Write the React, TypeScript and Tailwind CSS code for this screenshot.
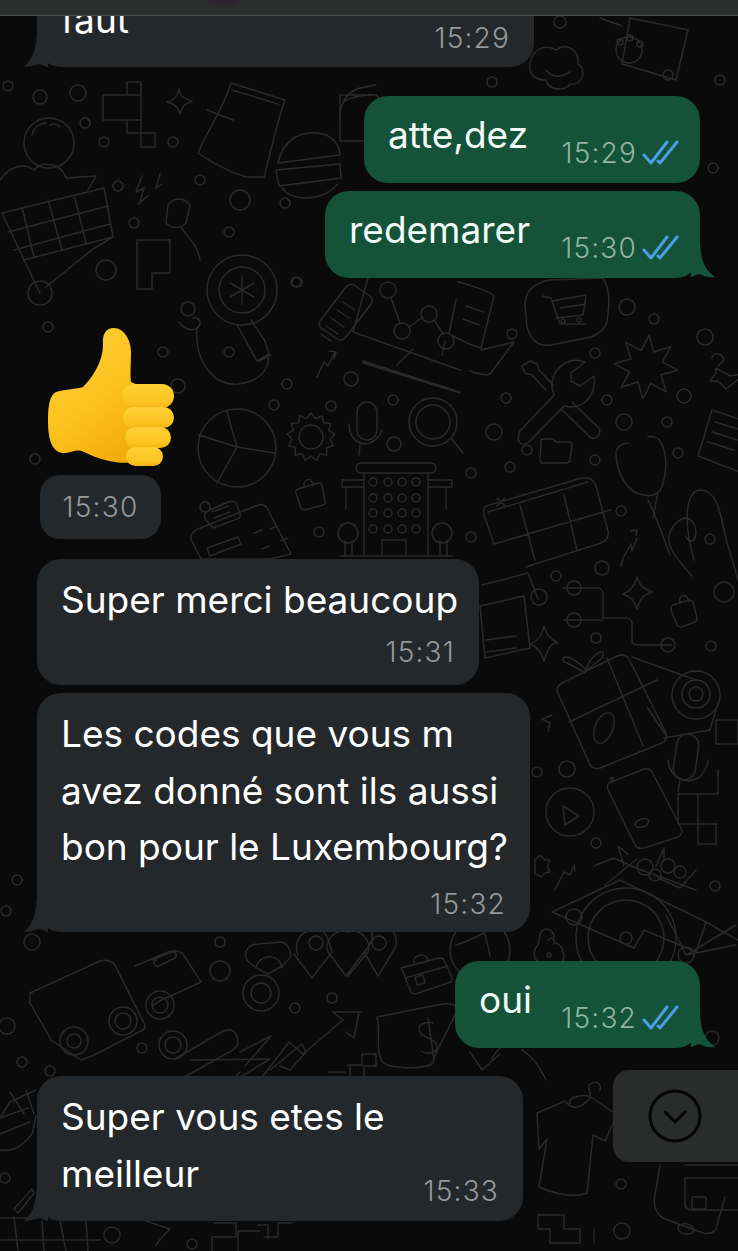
const DOTS: [number, number, number][] = [
  [188, 309, 7], [297, 282, 5], [229, 352, 5], [287, 384, 5], [351, 379, 7], [274, 405, 5], [331, 406, 5], [393, 400, 5],
  [394, 444, 7], [205, 507, 5], [319, 532, 5], [627, 307, 8], [654, 319, 5], [512, 334, 5], [705, 337, 8], [595, 353, 5],
  [506, 398, 5], [607, 400, 5], [684, 396, 7], [494, 432, 8], [624, 422, 8], [667, 422, 5], [527, 450, 5], [510, 467, 5],
  [595, 460, 5], [678, 453, 5], [471, 473, 5], [471, 537, 5], [621, 511, 5], [710, 539, 5], [556, 576, 5], [602, 568, 7],
  [539, 597, 8], [724, 592, 10], [596, 638, 5], [711, 646, 5], [567, 769, 8], [537, 772, 5], [596, 843, 5], [715, 886, 5],
  [574, 917, 8], [621, 1184, 5], [622, 1231, 8], [712, 1038, 7], [332, 998, 5], [295, 1008, 5], [32, 942, 8], [6, 911, 5],
  [17, 880, 5], [220, 942, 5], [220, 971, 10], [7, 1026, 8], [142, 1048, 5], [22, 1062, 5], [50, 1071, 5], [5, 1178, 5],
  [112, 1235, 8], [192, 1244, 5], [48, 327, 5], [163, 352, 5], [35, 459, 5], [178, 386, 7], [8, 86, 5], [40, 97, 7],
  [78, 93, 8], [85, 123, 5], [104, 142, 5], [173, 142, 5], [118, 186, 5], [200, 180, 5], [240, 200, 10], [285, 203, 5],
  [134, 223, 5], [229, 232, 5], [560, 22, 6], [492, 82, 5], [668, 75, 5], [720, 80, 5], [713, 168, 5], [296, 282, 5],
]

function spiky(cx: number, cy: number, outer: number, inner: number, points: number, rot = 0) {
  let d = ''
  for (let i = 0; i < points * 2; i++) {
    const r = i % 2 === 0 ? outer : inner
    const a = rot + (i * Math.PI) / points
    d += `${i === 0 ? 'M' : 'L'}${(cx + r * Math.sin(a)).toFixed(1)} ${(cy - r * Math.cos(a)).toFixed(1)} `
  }
  return d + 'Z'
}

// the wallpaper doodles, in page coordinates
function Wallpaper() {
  return (
    <svg className="absolute inset-0" width="738" height="1251" viewBox="0 0 738 1251" fill="none" stroke="#2a2a2a" strokeWidth="1.5" strokeLinecap="round" strokeLinejoin="round">
      {DOTS.map(([cx, cy, r], i) => <circle key={i} cx={cx} cy={cy} r={r} />)}

      {/* top left squares, star, bag, burger */}
      <path d="M127 82h14v13h-14zM103 95h38v25h-38zM127 120h14v13h-14zM141 133h14v14h-14z" />
      <path d="M179 89c2 8 5 10 13 12c-8 3-10 6-12 13c-2-7-5-10-13-12c7-2 10-5 12-13z" />
      <path d="M231 83l54 17c-8 22-15 55-21 77l-18 0c-18-6-34-14-48-24c10-24 26-46 33-70z" />
      <path d="M207 110l26 10M232 90l46 14" />
      <path d="M278 163c4-22 24-36 48-28c9 4 14 12 14 20zM276 170l64-6l1 14l-62 8zM282 188c10 14 40 14 56-4" />
      <path d="M340 118c0-14 6-26 20-30l16-3M372 95c-10 0-20 2-28 6" />
      <circle cx="49" cy="143" r="25" />
      <path d="M32 135c2-8 8-12 14-12M50 125c4-2 8-1 10 2" />
      <path d="M2 213l102-25l9 49l-89 23zM22 207l12 50M48 200l14 50M74 195l12 48M8 232l100-26M14 250l96-26" />
      <path d="M24 260l16 33M113 237l-20 12L46 287" />
      <circle cx="40" cy="293" r="12" />
      <circle cx="106" cy="270" r="10" />
      <path d="M0 180c10-14 24-18 34-10c10-10 28-6 32 8l30-2l-8 14" />
      <path d="M142 176l-6 16l8-4l-4 14M160 174l-4 14l6-4M148 196l-10 8M168 205c6-8 16-8 22 0l-4 18c-6 6-14 6-20 0zM180 226c10 14 18 20 20 34" />
      <path d="M137 240h33v33h-18v16h-15z" />
      <path d="M630 18l58 12l-12 50l-54-16zM600 18l22 8" />
      <circle cx="629" cy="50" r="13" />
      <circle cx="620" cy="42" r="3" />
      <circle cx="630" cy="38" r="3" />
      <circle cx="640" cy="44" r="3" />
      <path d="M530 70c-2-18 14-28 26-20c10-8 24 0 22 14c10 6 4 22-8 20c-6 8-22 6-24-4c-8 0-14-2-16-10zM546 70c6 8 14 8 24 2" />
      <path d="M340 95h36l22 24c-6 18-16 24-30 22h-28z" />

      {/* flower magnifier and lamp */}
      <circle cx="242" cy="290" r="35" />
      <circle cx="242" cy="290" r="23" />
      <path d="M242 276v28M230 283l24 14M230 297l24-14" />
      <path d="M237 325l20 36l12-7l-4-13l-14-21M259 361l12-6M268 355c2 12 -6 26-30 29c-24 2-44-22-41-56M197 328c-6 4-14 0-18-6M197 328c6-4 2-12-4-10" />

      {/* ram stick, arrow */}
      <path d="M320 321l26-34c2-3 5-3 8-2l16 11c3 2 3 5 1 8l-26 34c-2 2-5 3-8 1l-16-11c-2-2-3-5-1-7z" />
      <path d="M321 334l10 7M326 326l12 8M331 318l13 9M337 310l12 8M343 302l12 8" />
      <path d="M317 377l7-15l4 4l7-14M329 351l7 1l-2 7" />

      {/* laptop with chart */}
      <path d="M368 278l-15 54l107 38M363 363l97 30M373 364c-6-2-12-1-10-3l97 31M397 365l16-16M442 355l3-14" />
      <path d="M391 298l9 25M409 327l14-10M434 320l9 14M456 300l-7 33" />
      <circle cx="388" cy="290" r="8" />
      <circle cx="402" cy="331" r="8" />
      <circle cx="429" cy="314" r="8" />
      <circle cx="446" cy="341" r="8" />

      {/* pie chart, gear, lock, mic, magnifier */}
      <circle cx="237" cy="448" r="39" />
      <path d="M227 412l10 35l-38-12M237 447l38 6M237 447l-20 36" />
      <path d={spiky(311, 437, 24, 19, 13)} />
      <circle cx="311" cy="437" r="12" />
      <path d="M298 489l20-6c2-1 3 0 4 2l3 16c1 2 0 3-2 4l-18 5c-2 0-3 0-4-2l-5-15c-1-2 0-3 2-4zM304 487c-1-10 9-10 9-1" />
      <rect x="357" y="402" width="20" height="38" rx="10" />
      <path d="M349 424c0 22 24 28 33 6M360 445l-1 10" />
      <circle cx="433" cy="422" r="24" />
      <circle cx="433" cy="422" r="17" />
      <path d="M451 438l12 15" />

      {/* building */}
      <rect x="356" y="463" width="80" height="10" rx="5" />
      <path d="M364 473v82M428 473v82M364 480h-22v7h22M428 480h24v7h-24M346 487v22M446 487v22M345 541v15M352 541v15M440 541v15M447 541v15M340 556h112M382 556v-16h24v16" />
      <circle cx="348" cy="533" r="10" />
      <circle cx="442" cy="533" r="10" />
      {[482, 498, 513, 529].map(y => [373, 388, 402, 416].map(x => <circle key={`${x}-${y}`} cx={x} cy={y} r="4" />))}

      {/* calculator */}
      <path d="M198 529l60-24c4-1 7 0 9 3l24 46l-20 5h-70l-10-20c-1-5 3-8 7-10z" />
      <path d="M206 520c-3-4-1-8 2-9l20-9c5-2 8 0 9 3l3 8c1 3 0 5-3 6l-24 9z M212 512l16-6M214 518l16-6" />
      <path d="M207 548l31-11l3 7l-31 12zM254 533l8-3M270 529l7-3M262 549l7-3M281 541l7-3" />

      {/* cart blob */}
      <path d="M525 305c0-14 10-22 24-25l54-2c8 12 6 30 4 44c-2 8-8 12-16 15l-40 8c-12 2-20-4-24-18z" />
      <path d="M543 296l8 2l9 26h26M552 301l34-6l-3 20l-27 3M560 308l26-4" />
      <circle cx="563" cy="321" r="2" />
      <circle cx="579" cy="320" r="2" />

      {/* wrench, star, stethoscope, folder, table */}
      <path d="M520 431l34-36c-5-12-1-28 16-34c5-1 10-1 15 1l-14 11l0 8l9 5l14-10c2 12-4 26-16 30c-6 2-10 1-14 0l-35 36c-5 4-10 2-11-3z" />
      <path d="M572 402l27 26c3 6-3 12-8 10l-29-28M546 390l-14-15l-7-2l-3-7l8-5l7 3l2 6l14 15" />
      <path d={spiky(646, 367, 32, 17, 8, 0.1)} />
      <path d="M544 439h9l3 3h13c2 0 3 2 3 4l-2 14c0 2-2 3-4 3h-23c-2 0-3-2-3-4l1-18c0-1 1-2 3-2z" />
      <path d="M486 506l96-28c7-1 12 2 14 8l12 45c1 6-2 10-7 12l-75 24M486 506c-3 3-3 8-1 12l9 26M488 512l100-30M494 544l116-34M520 505l15 55M564 495l13 55M497 498l8 8M505 498l-8 8" />
      <path d="M628 443c-5 0-12 4-12 10c0 18 10 40 28 42c8 2 14 0 18-8c6-20 4-36-2-46c-2-4-8-5-12-4M648 500c10 20 16 40 22 55M658 492l-5 26" />
      <path d="M694 560c-8-26-12-68 6-70c16 0 20 20 24 40c4 20 12 40 14 50M680 520c-8 6-14 14-10 26c6 14 14 20 22 30M680 520c10-6 16 4 16 14c-2 10-8 8-10 2" />
      <path d="M621 566l2-8l8-14l1 7l5-13M631 531l6-1l-1 5" />
      <path d="M712 410l42 14l-14 48l-42-16zM715 422l26 8M712 432l26 8M708 442l26 8" />
      <path d="M716 368l14 8l12-2l-2 4l-14 11l-8-8l-8 0l6-8zM712 358c0-6 10-6 12 2l-6 6" />
      <path d="M458 282c5 1 34 10 36 14l-13 52l-12-4l-16-8M481 350l33-8l-24 32c-4 2-12 0-20-3M466 306l18 6M463 319l16 6" />

      {/* circuit, star, lock */}
      <path d="M563 588h34c4 0 6 3 6 6v24h23c4 0 6 3 6 6v16c0 3 2 5 5 5h35M564 620h39" />
      <circle cx="574" cy="588" r="7" />
      <circle cx="574" cy="620" r="7" />
      <circle cx="668" cy="645" r="7" />
      <path d="M637 577c3 9 5 11 15 15c-9 3-12 7-15 17c-3-9-7-13-14-15c8-3 11-8 14-17z" />
      <path d="M544 626c3 9 5 12 14 17c-8 0-10 6-14 18c-2-8-6-14-14-17c8-3 12-8 14-18z" />
      <path d="M673 605l16-5c2 0 3 0 4 2l4 16c0 2 0 3-2 4l-14 5c-2 0-3 0-4-2l-6-15c0-2 0-4 2-5zM680 603c-2-10 7-10 9-1" />
      <path d="M482 585l46-12l10 26M480 606l44-10l6 52l-45 10zM486 640l30-4M486 652l30-4" />

      {/* gift, roll, phone, play, mic, squares */}
      <path d="M562 683l55-27c5-2 9-2 12 3l36 72c3 6 1 10-3 12l-62 25c-4 1-8 0-10-3l-32-72c-2-4 0-8 4-10zM607 658l36 88M569 722l88-42" />
      <ellipse cx="604" cy="728" rx="9" ry="16" transform="rotate(22 604 728)" />
      <path d="M585 673c-6-4-14-8-18-10c-6-2-5-6 0-6c6 1 16 9 19 13c2-7 6-14 14-18c4-1 4 3 2 6l-16 13M552 715l-10 4l8 4l-2 8" />
      <path d="M632 657l64 23M664 738l46-8l7-24M647 707l20 30" />
      <circle cx="696" cy="695" r="24" />
      <circle cx="696" cy="694" r="14" />
      <circle cx="696" cy="694" r="7" />
      <path d="M609 783l35-14c3-1 6 0 8 3l29 56c2 4 0 7-3 9l-34 11c-4 1-7 0-9-3l-26-53c-2-4-2-7 0-9z" />
      <circle cx="612" cy="779" r="1.5" />
      <ellipse cx="642" cy="823" rx="7" ry="4" transform="rotate(-20 642 823)" />
      <rect x="675" y="734" width="22" height="46" rx="11" transform="rotate(8 686 757)" />
      <path d="M668 760c2 20 20 24 30 18c4-2 10-12 10-18M680 780l-2 12" />
      <circle cx="570" cy="812" r="24" />
      <path d="M563 806l16 10l-14 9z" />
      <path d="M678 794h40v-24M678 794v30h40M708 794h-10v50h18v-20M718 720h20M716 744h22v-24M716 744v-24h22" />
      <path d="M535 860l5-5l5 5l5 0l-3 6l3 6l-5 1l-4 4l-6-3zM555 890l9-18l6 3l4-10l1 6" />

      {/* bike basket */}
      <path d="M594 866l20-8l22 10l60 22M605 885l32-26M620 880l86 42l-10 30l-52-22l-10 18l-82-36zM706 922l32 18" />
      <path d="M624 866l-6-20l10 8M656 866l8-18l0 12M696 870l-16 18l-22-10" />
      <circle cx="645" cy="867" r="8" />
      <circle cx="655" cy="875" r="6" />
      <circle cx="668" cy="866" r="7" />
      <circle cx="680" cy="872" r="6" />
      <circle cx="626" cy="938" r="50" />
      <circle cx="626" cy="938" r="38" />
      <circle cx="626" cy="938" r="6" />
      <circle cx="686" cy="955" r="8" />
      <path d="M686 955l50-30M686 955l-20-40M686 955l50-10" />
      <path d="M540 935c2-8 10-8 14 0v8c8 0 14 14 6 22l-14 2c-10-2-16-14-8-22zM548 940c4-3 6-2 6 4" />
      <circle cx="549" cy="955" r="2" />

      {/* bottom row */}
      <path d="M30 993l70-32c6-2 12 0 15 4l30 60c0 2 0 4-2 5l-51 26l-11 4l-30-20c-4-8-16-28-21-37zM135 966l28-12c8-4 16-4 20 0l18 28l-30 14c-6 2-14 6-18 10" />
      <path d="M152 960l20-8c5 0 5 4 3 6l-16 8c-4 2-7-4-3-6" />
      <circle cx="74" cy="1041" r="14" />
      <circle cx="74" cy="1041" r="7" />
      <circle cx="123" cy="1021" r="14" />
      <circle cx="123" cy="1021" r="8" />
      <circle cx="160" cy="1005" r="14" />
      <circle cx="160" cy="1005" r="8" />
      <path d="M175 1059l48-28c6-2 12-2 14 6c2 8 0 10-6 14l-50 28M175 1059h0M190 1060l80-1l-46 28H190" />
      <circle cx="173" cy="1045" r="14" />
      <circle cx="173" cy="1045" r="8" />
      <path d="M246 958c-2-8 4-14 12-14l24-2c6 2 10 10 8 16l-8 8l-14 8c-8-4-20-10-22-16zM256 968c2-14 24-16 26 0" />
      <circle cx="261" cy="993" r="18" />
      <circle cx="261" cy="993" r="10" />
      <path d="M298 955c-4-10 0-24 14-24M312 978l-18-24M312 978l20-26c-3-10-4-16-10-22M346 976l-18-24c-4-12 8-24 20-20c12-4 24 8 20 20l-20 24M346 976l18-24c8-8 12-20 4-26M378 976l-14-24M378 976l16-26c4-8 2-16-4-22" />
      <circle cx="316" cy="943" r="7" />
      <circle cx="379" cy="943" r="7" />
      <path d="M401 968l38-10c2 0 4 0 5 2l8 18c1 2 0 3-1 4l-36 12c-2 0-3 0-4-2l-8-20c-1-2-1-3-2-4zM414 963c-1-6 4-8 8-8c4 0 6 4 6 6M405 978l43-12" />
      <rect x="416" y="976" width="8" height="8" transform="rotate(-16 420 980)" />
      <path d="M240 1052l31-16l-26 30M240 1072l-20 22l-24 22M270 1070l32-26l4 8l-16 18l-10-4M362 1012l-3 0l-26 0l10 8l-40 34l-14-12l-26 34M359 1012l-5 26l-8-6" />
      <path d="M377 1017l60-12c2 0 12-4 22 2l-12 24c-4 8-14 26-14 32c-4 6-50 8-52-4c-6-12 0-26-4-42z" />
      <path d="M433 1023c-4-2-14 0-14 6c0 10 18 8 18 18c0 6-10 8-16 4M428 1018l6 42" />
      <path d="M348 1065h14v-11h14v12h-12v11h-14v-12zM329 1072h16" />
      <circle cx="480" cy="950" r="30" />
      <path d="M456 945c14-4 34-14 48-26M478 922c6 8 10 20 12 34" />
      <path d="M492 1059c4-10 20-22 34-30M470 1052l12 18l18-16M522 1050c10 6 16 14 24 30" />

      {/* shirt, card phone, corn, lower squares */}
      <path d="M537 1113l28-12c6 8 14 10 26-4l26 18l-12 26l-12-6l-6 58c-10 4-26 2-38-2l-10-4l8-48l-8 10z" />
      <path d="M570 1104c-2-6 8-10 20-8M590 1096c2-4-4-8 0-12c6-4 12 0 10 6" />
      <path d="M660 1165l-5 30c-2 8 0 20 10 24l38 14c8 2 14-2 14-8l8-28M685 1165h53M685 1178h53v0M685 1178v26c0 4 4 6 8 6h45" />
      <rect x="692" y="1197" width="14" height="12" rx="2" />
      <ellipse cx="686" cy="1229" rx="8" ry="5" transform="rotate(10 686 1229)" />
      <path d="M550 1215h14v14h16v14h-30v-14h-12v-14h12M594 1229v14" />
      <path d="M36 1090l-26 12l-10 16M0 1150c14 2 22-4 32-16l4-18M0 1118l28-10M10 1092l14 22M26 1090l8 24M0 1134l30-12" />
      <path d="M14 1209l18-20l2 4l-16 20zM0 1218h36M18 1251l-4-34M44 1251l-2-30M66 1251l-6-30M88 1251l-2-30M0 1240h100" />
      <path d="M146 1221l24 8l-8 8l-6 8" />
      <path d="M212 1251v-14h24v-14h-22M238 1251v-20h22M264 1237h14v-14h14M258 1225h10v14" />
    </svg>
  )
}

function Checks() {
  return (
    <svg width="38" height="26" viewBox="0 0 38 26" fill="none" stroke="#4a9fe3" strokeWidth="3" strokeLinecap="round" strokeLinejoin="round" className="shrink-0">
      <path d="M2 15l7 8L25 2" />
      <path d="M16 21l2 2L35 2" />
    </svg>
  )
}

function TailLeft() {
  return (
    <svg width="24" height="40" viewBox="0 0 24 40" className="absolute left-[-13px] bottom-0">
      <path d="M13 0C13 18 10 32 0 39.5c6 .5 9-.5 13-2 5-1 7 2.500 11 2.500V0z" fill="#25282a" />
    </svg>
  )
}

function TailRight() {
  return (
    <svg width="24" height="40" viewBox="0 0 24 40" className="absolute right-[-15px] bottom-0">
      <path d="M9 0c0 16 2 30 15 39c-7 .8-11-.8-14-2.500-3-1-6 1.500-10 2.500V0z" fill="#14523a" />
    </svg>
  )
}

function Thumb() {
  return (
    <svg width="127" height="139" viewBox="48 328 127 139" className="ml-[48px]">
      <defs>
        <linearGradient id="hand" x1="0" y1="0" x2="0.6" y2="1">
          <stop offset="0" stopColor="#ffd23a" />
          <stop offset="0.6" stopColor="#fcc21f" />
          <stop offset="1" stopColor="#f3ad0b" />
        </linearGradient>
        <linearGradient id="finger" x1="0" y1="0" x2="0" y2="1">
          <stop offset="0" stopColor="#ffd036" />
          <stop offset="0.75" stopColor="#fcc421" />
          <stop offset="1" stopColor="#f4b314" />
        </linearGradient>
      </defs>
      <path d="M56 392c10-3 20-3 27-5c10-10 20-26 20-42c-1-11 3-17 11-17c10 0 17 12 17 24c0 12-1 22 0 30l19 8v68c-20 8-42 6-66-6c-7-3-8-1-18 1c-14 1-18-13-18-33c0-15 2-25 8-28z" fill="url(#hand)" />
      <rect x="122" y="384" width="52" height="24" rx="12" fill="url(#finger)" />
      <rect x="123" y="407" width="51" height="21" rx="10.500" fill="url(#finger)" />
      <rect x="125" y="427" width="46" height="21" rx="10.500" fill="url(#finger)" />
      <rect x="126" y="447" width="37" height="19" rx="9.500" fill="url(#finger)" />
    </svg>
  )
}

function Incoming({ className, children }: { className: string; children: React.ReactNode }) {
  return <div className={`relative bg-[#25282a] rounded-[24px] ml-[37px] whitespace-nowrap ${className}`}>{children}</div>
}

function Outgoing({ text, time, width, tail, className }: { text: string; time: string; width: string; tail?: boolean; className: string }) {
  return (
    <div className={`relative self-end mr-[38px] h-[87px] bg-[#14523a] rounded-[24px] flex justify-between pl-[24px] pr-[20px] ${width} ${className}`}>
      <span className="text-[#f2fbf6] text-[37px] leading-[44px] mt-[17px]">{text}</span>
      <span className="flex items-center gap-[5px] mt-[44px] h-[26px] text-[#8db5a2] text-[28px] font-light tracking-[1.200px]">
        {time}
        <Checks />
      </span>
      {tail && <TailRight />}
    </div>
  )
}

export default function App() {
  return (
    <div className="relative w-[738px] h-[1251px] overflow-hidden bg-[#0a0a0a] flex flex-col font-['Inter','Liberation_Sans',sans-serif]">
      <Wallpaper />

      <header className="relative z-10 h-[16px] shrink-0 overflow-hidden bg-[#2b2c2c] border-b border-b-[#4a4a4a]">
        <div className="absolute left-[203px] top-[-22px] w-[40px] h-[27px] rounded-full bg-[#2d2433]" />
      </header>

      <main className="relative flex flex-col">
        <Incoming className="w-[497px] h-[91px] mt-[-40px] flex justify-between pl-[24px] pr-[24px]">
          <span className="text-white text-[37px] leading-[44px] mt-[22px]">faut</span>
          <span className="text-[#959898] text-[28px] font-light tracking-[1.200px] leading-[34px] mt-[45px]">15:29</span>
          <TailLeft />
        </Incoming>

        <Outgoing text="atte,dez" time="15:29" width="w-[336px]" className="mt-[29px]" />
        <Outgoing text="redemarer" time="15:30" width="w-[375px]" tail className="mt-[8px]" />

        <div className="mt-[50px]">
          <Thumb />
        </div>

        <div className="ml-[40px] mt-[8px] w-[121px] h-[64px] bg-[#25282a] rounded-[20px] flex items-center justify-center text-[#959898] text-[28px] font-light tracking-[1.200px]">
          15:30
        </div>

        <Incoming className="w-[442px] h-[126px] mt-[20px] flex flex-col pl-[24px] pr-[24px]">
          <span className="text-white text-[37px] leading-[44px] mt-[19px]">Super merci beaucoup</span>
          <span className="self-end text-[#959898] text-[28px] font-light tracking-[1.200px] leading-[34px] mt-[13px]">15:31</span>
        </Incoming>

        <Incoming className="w-[493px] h-[239px] mt-[8px] flex flex-col pl-[24px] pr-[24px]">
          <p className="text-white text-[37px] leading-[56.500px] mt-[13px]">
            Les codes que vous m<br />avez donné sont ils aussi<br />bon pour le Luxembourg?
          </p>
          <span className="self-end text-[#959898] text-[28px] font-light tracking-[1.200px] leading-[34px] mt-[11px]">15:32</span>
          <TailLeft />
        </Incoming>

        <Outgoing text="oui" time="15:32" width="w-[245px]" tail className="mt-[29px]" />

        <Incoming className="w-[486px] h-[145px] mt-[28px] pl-[24px] pr-[24px]">
          <p className="text-white text-[37px] leading-[56.500px] pt-[13px]">
            Super vous etes le<br />meilleur
          </p>
          <span className="absolute right-[24px] bottom-[13px] text-[#959898] text-[28px] font-light tracking-[1.200px] leading-[34px]">15:33</span>
          <TailLeft />
        </Incoming>
      </main>

      {/* scroll to bottom button */}
      <button className="absolute left-[613px] top-[1070px] w-[125px] h-[92px] bg-[#2a2c2c] rounded-l-[16px] flex items-center justify-center pr-[2px]">
        <svg width="54" height="54" viewBox="0 0 54 54" fill="none" stroke="#050505" strokeWidth="3" strokeLinecap="round" strokeLinejoin="round">
          <circle cx="27" cy="27" r="25" />
          <path d="M17 23l10 10l10-10" />
        </svg>
      </button>
    </div>
  )
}
